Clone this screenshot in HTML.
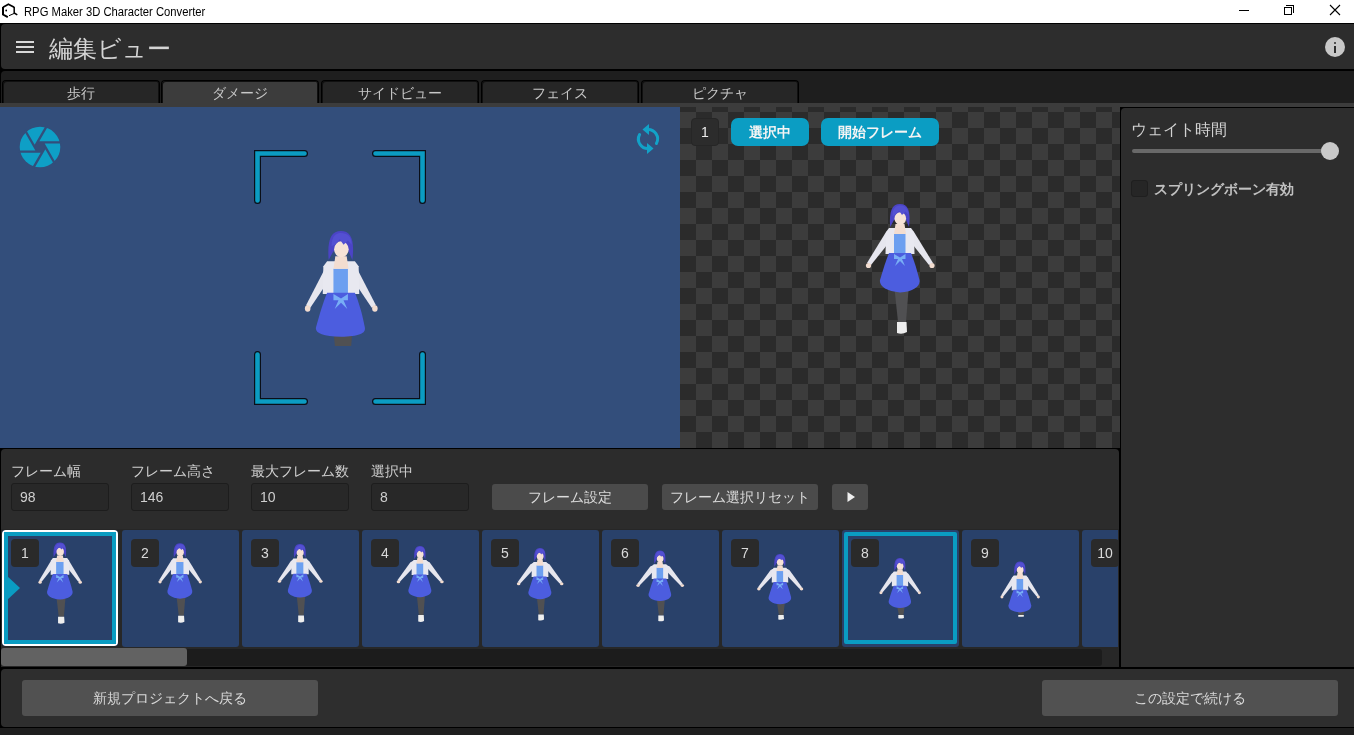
<!DOCTYPE html>
<html><head><meta charset="utf-8">
<style>
*{margin:0;padding:0;box-sizing:border-box}
html,body{width:1354px;height:735px;overflow:hidden;background:#000;-webkit-font-smoothing:antialiased;font-family:"Liberation Sans",sans-serif}
.a{position:absolute}
#root{position:absolute;left:0;top:0;width:1354px;height:735px;will-change:transform}
#title{left:0;top:0;width:1354px;height:23px;background:#fff}
#title .t{left:24px;top:4px;font-size:12.5px;color:#000;white-space:nowrap;line-height:16px;transform:scaleX(0.9);transform-origin:0 0}
#hdr{left:1px;top:24px;width:1353px;height:45px;background:#2d2d2d;border-radius:4px 0 0 4px}
#tabbar{left:1px;top:71px;width:1353px;height:34px;background:#1e1e1e;border-radius:4px 0 0 0}
.tab{top:80px;width:158px;height:24px;background:#262626;border:1px solid #000;border-bottom:none;box-shadow:inset 1px 1px 0 #101010,inset -1px 0 0 #101010;border-radius:4px 4px 0 0;color:#c8c8c8;font-size:14px;text-align:center;line-height:24px}
.tab.sel{background:#3c3c3c}
#strip{left:0;top:103px;width:1354px;height:4px;background:#3c3c3c}
#view{left:0;top:107px;width:680px;height:341px;background:#334e7b;overflow:hidden}
#checker{left:680px;top:107px;width:440px;height:341px;overflow:hidden;
 background-color:#3c3c3c;
 background-image:linear-gradient(45deg,#2b2b2b 25%,transparent 25%,transparent 75%,#2b2b2b 75%),linear-gradient(45deg,#2b2b2b 25%,transparent 25%,transparent 75%,#2b2b2b 75%);
 background-size:32px 32px;background-position:0 5px,16px 21px}
#rpanel{left:1121px;top:108px;width:233px;height:559px;background:#2d2d2d;border-radius:4px 0 0 0}
#fpanel{left:1px;top:449px;width:1118px;height:80px;background:#2c2c2c;border-radius:4px 4px 0 0}
#fstrip{left:1px;top:529px;width:1118px;height:138px;background:#272727}
#foot{left:1px;top:669px;width:1353px;height:58px;background:#2e2e2e;border-radius:4px 0 0 4px}
#bot{left:0;top:728px;width:1354px;height:7px;background:#1e1e1e}
.lbl{font-size:14px;color:#cfcfcf;white-space:nowrap;line-height:16px}
.inp{width:98px;height:28px;background:#282828;border:1px solid #1d1d1d;border-radius:3px;color:#cfcfcf;font-size:14px;line-height:26px;padding-left:8px}
.btn{height:26px;background:#4b4b4b;border-radius:3px;color:#dcdcdc;font-size:14px;text-align:center;line-height:26px;white-space:nowrap}
.frame{top:530px;width:117px;height:117px;background:#29416a;border-radius:3px;overflow:hidden}
.badge{width:28px;height:28px;background:#2a2a2a;border-radius:4px;color:#dadada;font-size:14px;text-align:center;line-height:28px}
.fbtn{height:36px;background:#515151;border-radius:3px;color:#d8d8d8;font-size:14px;text-align:center;line-height:36px}
</style></head><body><div id="root">
<svg width="0" height="0" style="position:absolute;left:0;top:0"><defs>
<g id="arms">
 <path d="M-10,26 L-14,28 L-33,59 L-29,61 L-9,36 Z" fill="#e6e6ee"/>
 <path d="M10,26 L14,28 L33,59 L29,61 L9,36 Z" fill="#e6e6ee"/>
 <circle cx="-31.5" cy="61.5" r="2.6" fill="#f2dccf"/>
 <circle cx="32" cy="61.5" r="2.6" fill="#f2dccf"/>
</g>
<g id="body">
 <path d="M-11,24 L11,24 L14,28 L14.5,50 L-14.5,50 L-14,28 Z" fill="#e8e8f0"/>
 <rect x="-6" y="30" width="11.5" height="21" fill="#6c9ff0"/>
 <path d="M-4.5,20 L4.5,20 L6,30 L-6,30 Z" fill="#f3ddd0"/>
 <path d="M-11,49 L11,49 C14,56 17,66 19.5,76 C20.5,82 14,87.5 0,88.5 C-14,87.5 -21,82 -20,76 C-17,66 -14,56 -11,49 Z" fill="#4c5ddf"/>
 <path d="M-6,50 L0,53.5 L5.5,50 L5.5,55 L2,55 L5,62 L0,57 L-5,62 L-2,55 L-6,55 Z" fill="#78aef6"/>
 <path d="M-9.8,23 C-11,7 -8,0 0,0 C8,0 11,7 9,23 L6,16 L-6,16 Z" fill="#4b44c6"/>
 <ellipse cx="0.3" cy="14.5" rx="5.8" ry="6.3" fill="#f6e2d6"/>
 <path d="M-7.5,12 C-7.5,3 -3,1.5 0,1.5 C5,1.5 8.5,4 8.5,11 L5.5,7.5 L2,11 L-1,6.5 L-4.5,11 Z" fill="#5450d2"/>
</g>
<g id="bodyv">
 <path d="M-11,24 L11,24 L14,28 L14.5,50 L-14.5,50 L-14,28 Z" fill="#e8e8f0"/>
 <rect x="-6" y="30" width="11.5" height="21" fill="#6c9ff0"/>
 <path d="M-4.5,20 L4.5,20 L6,30 L-6,30 Z" fill="#f3ddd0"/>
 <path d="M-11,49 L11,49 C14,56 17,66 19,77 C19.5,81.5 14,83.5 0,84 C-14,83.5 -20,81.5 -20,77 C-17,66 -14,56 -11,49 Z" fill="#4c5ddf"/>
 <path d="M-6,50 L0,53.5 L5.5,50 L5.5,55 L2,55 L5,62 L0,57 L-5,62 L-2,55 L-6,55 Z" fill="#78aef6"/>
 <path d="M-9.8,23 C-11,7 -8,0 0,0 C8,0 11,7 9,23 L6,16 L-6,16 Z" fill="#4b44c6"/>
 <ellipse cx="0.3" cy="14.5" rx="5.8" ry="6.3" fill="#f6e2d6"/>
 <path d="M-7.5,12 C-7.5,3 -3,1.5 0,1.5 C5,1.5 8.5,4 8.5,11 L5.5,7.5 L2,11 L-1,6.5 L-4.5,11 Z" fill="#5450d2"/>
</g>
<g id="up"><use href="#arms"/><use href="#body"/></g>
<g id="legs">
 <path d="M-6,80 L9,80 L6,118 L-2,118 Z" fill="#505052"/>
 <path d="M-3,118 L6.5,118 L7,128 Q2,131 -3,129 Z" fill="#eeeeee"/>
</g>
</defs></svg>

<div id="title" class="a">
 <svg class="a" style="left:0;top:0" width="22" height="22" viewBox="0 0 22 22"><path d="M3,7.2 L8.4,4.2 L14.2,7.2" fill="none" stroke="#000" stroke-width="1.7" stroke-linejoin="round"/><path d="M3,7 L3,14.5 L7.8,17.2" fill="none" stroke="#000" stroke-width="2"/><path d="M14.2,7 L14.2,13 L17.3,14.8" fill="none" stroke="#000" stroke-width="1.5"/><path d="M9,15.7 L14,13.5" stroke="#000" stroke-width="1"/><circle cx="6.2" cy="10.5" r="0.9" fill="#000"/></svg>
 <div class="a t">RPG Maker 3D Character Converter</div>
 <div class="a" style="left:1239px;top:10px;width:10px;height:1px;background:#000"></div>
 <div class="a" style="left:1284px;top:7px;width:8px;height:8px;border:1px solid #000;background:#fff"></div>
 <div class="a" style="left:1286px;top:5px;width:8px;height:2px;border-top:1px solid #000;border-right:1px solid #000"></div>
 <div class="a" style="left:1293px;top:5px;width:1px;height:8px;background:#000"></div>
 <svg class="a" style="left:1329px;top:4px" width="12" height="12" viewBox="0 0 12 12"><path d="M1,1 L11,11 M11,1 L1,11" stroke="#000" stroke-width="1.1"/></svg>
</div>
<div id="hdr" class="a">
 <div class="a" style="left:15px;top:17px;width:18px;height:2px;background:#d8d8d8"></div>
 <div class="a" style="left:15px;top:22px;width:18px;height:2px;background:#d8d8d8"></div>
 <div class="a" style="left:15px;top:27px;width:18px;height:2px;background:#d8d8d8"></div>
 <div class="a" style="left:48px;top:11px;font-size:23.5px;line-height:28px;color:#d4d4d4;white-space:nowrap">編集ビュー</div>
 <div class="a" style="left:1324px;top:13px;width:20px;height:20px;border-radius:50%;background:#c8c8c8"></div>
 <div class="a" style="left:1333px;top:18px;width:2.4px;height:2.4px;border-radius:50%;background:#2d2d2d"></div>
 <div class="a" style="left:1333px;top:22px;width:2.4px;height:7px;background:#2d2d2d"></div>
</div>
<div id="tabbar" class="a"></div>
<div class="a tab" style="left:2px">歩行</div>
<div class="a tab sel" style="left:161px">ダメージ</div>
<div class="a tab" style="left:321px">サイドビュー</div>
<div class="a tab" style="left:481px">フェイス</div>
<div class="a tab" style="left:641px">ピクチャ</div>
<div id="strip" class="a"></div>
<div id="view" class="a"><svg class="a" style="left:0;top:0" width="680" height="341" viewBox="0 107 680 341"><circle cx="40" cy="147" r="20.3" fill="#0e9fc6"/><path d="M37.40,142.40 L62.00,142.40 M42.68,142.45 L54.98,163.75 M45.28,147.05 L32.98,168.35 M42.60,151.60 L18.00,151.60 M37.32,151.55 L25.02,130.25 M34.72,146.95 L47.02,125.65" stroke="#334e7b" stroke-width="2.3" fill="none"/><polygon points="45.30,147.00 42.65,151.59 37.35,151.59 34.70,147.00 37.35,142.41 42.65,142.41" fill="#334e7b"/><g transform="translate(625,115)" fill="none" stroke="#12a2c8" stroke-width="3"><path d="M22,14.5 A9.5,9.5 0 0 1 31.4,28.5" stroke-linecap="round"/><path d="M14.6,19.5 A9.5,9.5 0 0 0 24,33.5" stroke-linecap="round"/></g><g transform="translate(625,115)" fill="#12a2c8"><polygon points="17.5,14.5 24,9 24,20"/><polygon points="28.5,33.5 22,28 22,39"/></g><path d="M257.5,200.5 V153.5 H304.5" fill="none" stroke="#0a0f18" stroke-width="7" stroke-linejoin="miter" stroke-linecap="round"/><path d="M422.5,200.5 V153.5 H375.5" fill="none" stroke="#0a0f18" stroke-width="7" stroke-linejoin="miter" stroke-linecap="round"/><path d="M257.5,354.5 V401.5 H304.5" fill="none" stroke="#0a0f18" stroke-width="7" stroke-linejoin="miter" stroke-linecap="round"/><path d="M422.5,354.5 V401.5 H375.5" fill="none" stroke="#0a0f18" stroke-width="7" stroke-linejoin="miter" stroke-linecap="round"/><path d="M257.5,200.5 V153.5 H304.5" fill="none" stroke="#0b9cc2" stroke-width="4.6" stroke-linejoin="miter" stroke-linecap="round"/><path d="M422.5,200.5 V153.5 H375.5" fill="none" stroke="#0b9cc2" stroke-width="4.6" stroke-linejoin="miter" stroke-linecap="round"/><path d="M257.5,354.5 V401.5 H304.5" fill="none" stroke="#0b9cc2" stroke-width="4.6" stroke-linejoin="miter" stroke-linecap="round"/><path d="M422.5,354.5 V401.5 H375.5" fill="none" stroke="#0b9cc2" stroke-width="4.6" stroke-linejoin="miter" stroke-linecap="round"/></svg><svg class="a" style="left:0;top:0" width="680" height="341" viewBox="0 0 680 341"><defs><clipPath id="vclip"><rect x="0" y="0" width="680" height="239"/></clipPath></defs><g clip-path="url(#vclip)"><g transform="translate(341.00,228.08) scale(1.260,1.260) translate(0,-82.6)"><use href="#legs"/></g><g transform="translate(341.00,124.00) scale(1.260)"><g transform="scale(0.84,1.0)"><use href="#arms"/></g><use href="#bodyv"/></g></g></svg></div>
<div id="checker" class="a"><svg class="a" style="left:0;top:0" width="440" height="341"><g transform="translate(220.00,179.60) scale(1.000,1.000) translate(0,-82.6)"><use href="#legs"/></g><g transform="translate(220.00,97.00) scale(1.000)"><use href="#up"/></g></svg><div class="a badge" style="left:11px;top:11px;background:#2c2c2c;border:1px solid #262626;color:#ececec;line-height:26px">1</div><div class="a" style="left:51px;top:11px;width:78px;height:28px;border-radius:7px;background:#0b9dc3;color:#f4f4f4;font-size:14px;line-height:28px;text-align:center;font-weight:bold">選択中</div><div class="a" style="left:141px;top:11px;width:118px;height:28px;border-radius:7px;background:#0b9dc3;color:#f4f4f4;font-size:14px;line-height:28px;text-align:center;font-weight:bold">開始フレーム</div></div>
<div id="rpanel" class="a"><div class="a" style="left:10px;top:13px;font-size:16px;line-height:18px;color:#d2d2d2;white-space:nowrap">ウェイト時間</div><div class="a" style="left:11px;top:41px;width:200px;height:4px;border-radius:2px;background:#696969"></div><div class="a" style="left:200px;top:34px;width:18px;height:18px;border-radius:50%;background:#c9c9c9"></div><div class="a" style="left:10px;top:72px;width:17px;height:17px;border-radius:3px;background:#262626;border:1px solid #1f1f1f"></div><div class="a" style="left:33px;top:73px;font-size:14px;line-height:16px;color:#c0c0c0;white-space:nowrap;font-weight:bold">スプリングボーン有効</div></div>
<div id="fpanel" class="a"><div class="a lbl" style="left:10px;top:14px">フレーム幅</div><div class="a inp" style="left:10px;top:34px">98</div><div class="a lbl" style="left:130px;top:14px">フレーム高さ</div><div class="a inp" style="left:130px;top:34px">146</div><div class="a lbl" style="left:250px;top:14px">最大フレーム数</div><div class="a inp" style="left:250px;top:34px">10</div><div class="a lbl" style="left:370px;top:14px">選択中</div><div class="a inp" style="left:370px;top:34px">8</div><div class="a btn" style="left:491px;top:35px;width:156px">フレーム設定</div><div class="a btn" style="left:661px;top:35px;width:156px">フレーム選択リセット</div><div class="a btn" style="left:831px;top:35px;width:36px"><svg class="a" style="left:14px;top:7px" width="10" height="12" viewBox="0 0 10 12"><path d="M1.5,1 L9,6 L1.5,11 Z" fill="#f0f0f0"/></svg></div></div>
<div id="fstrip" class="a"></div>
<div class="a" style="left:0;top:0;width:1118px;height:735px;overflow:hidden"><div class="a frame" style="left:2px;width:116px;height:116px"><svg class="a" style="left:0;top:0" width="117" height="116"><g transform="translate(58.00,65.78) scale(0.645,0.593) translate(0,-82.6)"><use href="#legs"/></g><g transform="translate(58.00,12.50) scale(0.645)"><g transform="scale(0.98,1)"><use href="#arms"/></g><use href="#body"/></g></svg><div class="a" style="left:0;top:0;width:116px;height:116px;border:2px solid #fff;border-radius:4px"></div><div class="a" style="left:2px;top:2px;width:112px;height:112px;border:4px solid #0a9cc2"></div><svg class="a" style="left:2px;top:44px" width="20" height="28"><path d="M2,1 L16,14 L2,27 Z" fill="#0a9cc2"/></svg><div class="a badge" style="left:9px;top:9px">1</div></div><div class="a frame" style="left:122px;width:117px"><svg class="a" style="left:0;top:0" width="117" height="116"><g transform="translate(58.00,64.99) scale(0.627,0.589) translate(0,-82.6)"><use href="#legs"/></g><g transform="translate(58.00,13.20) scale(0.627)"><g transform="scale(1.01,1)"><use href="#arms"/></g><use href="#body"/></g></svg><div class="a badge" style="left:9px;top:9px">2</div></div><div class="a frame" style="left:242px;width:117px"><svg class="a" style="left:0;top:0" width="117" height="116"><g transform="translate(58.00,63.97) scale(0.605,0.605) translate(0,-82.6)"><use href="#legs"/></g><g transform="translate(58.00,14.00) scale(0.605)"><g transform="scale(1.08,1)"><use href="#arms"/></g><use href="#body"/></g></svg><div class="a badge" style="left:9px;top:9px">3</div></div><div class="a frame" style="left:362px;width:117px"><svg class="a" style="left:0;top:0" width="117" height="116"><g transform="translate(58.00,63.91) scale(0.580,0.597) translate(0,-82.6)"><use href="#legs"/></g><g transform="translate(58.00,16.00) scale(0.580)"><g transform="scale(1.18,1)"><use href="#arms"/></g><use href="#body"/></g></svg><div class="a badge" style="left:9px;top:9px">4</div></div><div class="a frame" style="left:482px;width:117px"><svg class="a" style="left:0;top:0" width="117" height="116"><g transform="translate(58.00,65.91) scale(0.580,0.522) translate(0,-82.6)"><use href="#legs"/></g><g transform="translate(58.00,18.00) scale(0.580)"><g transform="scale(1.17,1)"><use href="#arms"/></g><use href="#body"/></g></svg><div class="a badge" style="left:9px;top:9px">5</div></div><div class="a frame" style="left:602px;width:117px"><svg class="a" style="left:0;top:0" width="117" height="116"><g transform="translate(58.00,67.66) scale(0.571,0.502) translate(0,-82.6)"><use href="#legs"/></g><g transform="translate(58.00,20.50) scale(0.571)"><g transform="scale(1.22,1)"><use href="#arms"/></g><use href="#body"/></g></svg><div class="a badge" style="left:9px;top:9px">6</div></div><div class="a frame" style="left:722px;width:117px"><svg class="a" style="left:0;top:0" width="117" height="116"><g transform="translate(58.00,71.00) scale(0.569,0.398) translate(0,-82.6)"><use href="#legs"/></g><g transform="translate(58.00,24.00) scale(0.569)"><g transform="scale(1.18,1)"><use href="#arms"/></g><use href="#body"/></g></svg><div class="a badge" style="left:9px;top:9px">7</div></div><div class="a frame" style="left:842px;width:117px"><svg class="a" style="left:0;top:0" width="117" height="116"><g transform="translate(58.00,74.67) scale(0.565,0.294) translate(0,-82.6)"><use href="#legs"/></g><g transform="translate(58.00,28.00) scale(0.565)"><g transform="scale(1.07,1)"><use href="#arms"/></g><use href="#body"/></g></svg><div class="a" style="left:2px;top:2px;width:113px;height:112px;border:4px solid #0a9cc2;border-radius:2px"></div><div class="a badge" style="left:9px;top:9px">8</div></div><div class="a frame" style="left:962px;width:117px"><svg class="a" style="left:0;top:0" width="117" height="116"><g transform="translate(58.00,79.01) scale(0.574,0.166) translate(0,-82.6)"><use href="#legs"/></g><g transform="translate(58.00,31.60) scale(0.574)"><g transform="scale(1.0,1)"><use href="#arms"/></g><use href="#body"/></g></svg><div class="a badge" style="left:9px;top:9px">9</div></div><div class="a frame" style="left:1082px;width:117px"><svg class="a" style="left:0;top:0" width="117" height="116"><g transform="translate(58.00,82.08) scale(0.570,0.171) translate(0,-82.6)"><use href="#legs"/></g><g transform="translate(58.00,35.00) scale(0.570)"><g transform="scale(1.0,1)"><use href="#arms"/></g><use href="#body"/></g></svg><div class="a badge" style="left:9px;top:9px">10</div></div></div><div class="a" style="left:1px;top:649px;width:1101px;height:17px;background:#1c1c1c;border-radius:3px"></div><div class="a" style="left:1px;top:648px;width:186px;height:18px;background:#626262;border-radius:3px"></div>
<div id="foot" class="a"><div class="a fbtn" style="left:21px;top:11px;width:296px">新規プロジェクトへ戻る</div><div class="a fbtn" style="left:1041px;top:11px;width:296px">この設定で続ける</div></div>
<div id="bot" class="a"></div>
</div></body></html>
